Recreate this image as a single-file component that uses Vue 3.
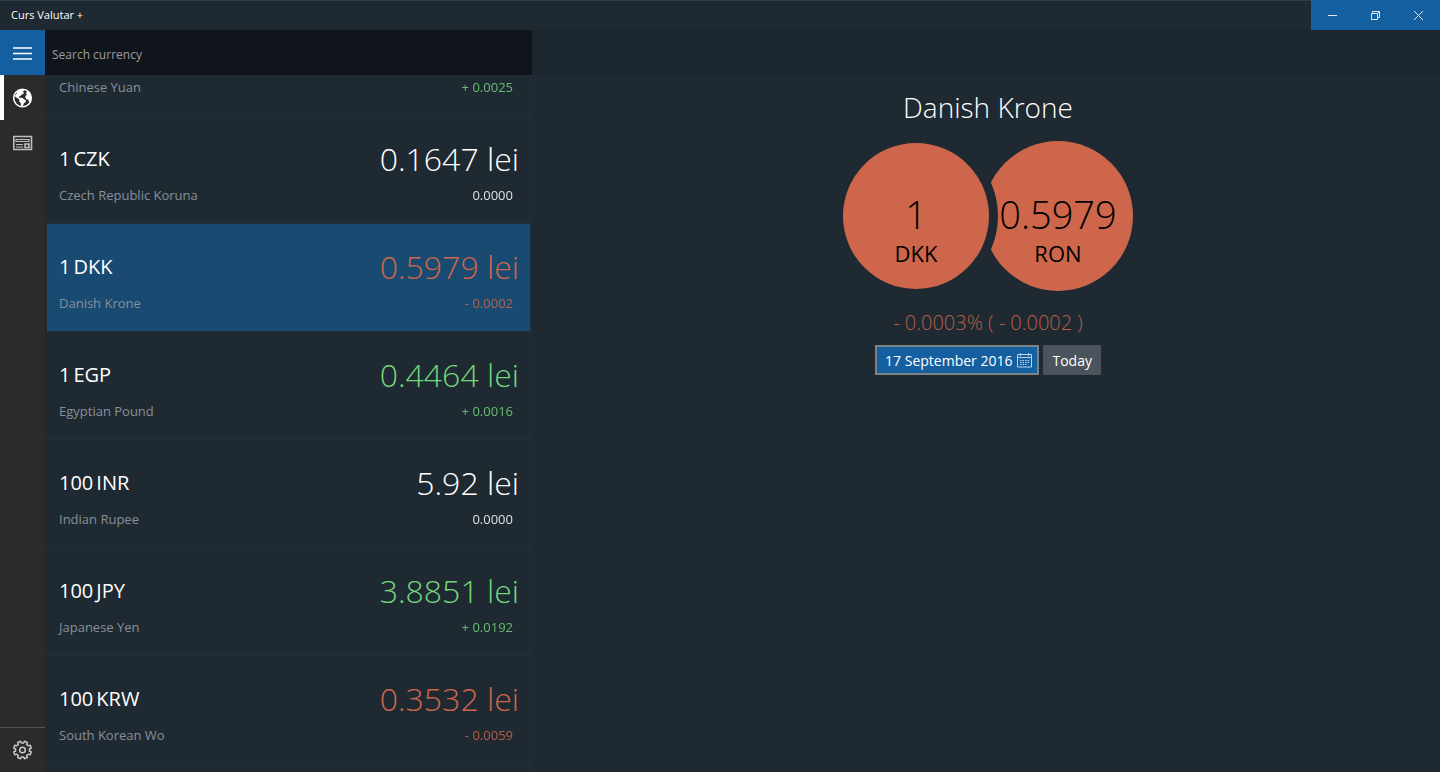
<template>
  <div class="window">
    <header class="titlebar">
      <h1 class="titlebar__title">Curs Valutar +</h1>
      <div class="titlebar__controls">
        <button class="control" type="button" aria-label="Minimize">
          <svg width="11" height="11" viewBox="0 0 11 11"><path d="M1 5.5h9" /></svg>
        </button>
        <button class="control" type="button" aria-label="Restore">
          <svg width="11" height="11" viewBox="0 0 11 11">
            <path d="M1.5 3.5h6v6h-6zM2.5 3.5v-2h7v6h-2M7.5 3.5l2-2" />
          </svg>
        </button>
        <button class="control" type="button" aria-label="Close">
          <svg width="11" height="11" viewBox="0 0 11 11"><path d="M1 1l9 9M10 1l-9 9" /></svg>
        </button>
      </div>
    </header>

    <div class="body">
      <nav class="rail">
        <button class="rail__item rail__item--menu" type="button" aria-label="Menu">
          <svg width="20" height="14" viewBox="0 0 20 14">
            <path d="M0 2h19M0 7.500h19M0 13h19" stroke="#fff" stroke-width="1.600" />
          </svg>
        </button>
        <button class="rail__item rail__item--active" type="button" aria-label="Currencies">
          <svg width="20" height="20" viewBox="0 0 20 20">
            <circle cx="9.500" cy="10" r="8.800" fill="#2b2b2b" stroke="#fff" stroke-width="1.500" />
            <path
              fill="#fff"
              d="M4.500 3.200 7 1.500 10.500 1l.8 1.700-1.500.6 1 1.200-.6 1.700-1.700.4-.8 1.400-1.500.3-.5 1.300 1.500.2 2.400.2 1.700 1.500 1.700.8-.5 1.900-1.600 1.100-.6 1.800-1.200 1.200-1-.5-.4-2.700-1.600-1.600.2-1.900-1.700-1.300-1.200-.8L1.400 8 3.200 6.400z"
            />
            <path fill="#fff" d="M12.600 2 15.500 3.400 17.800 6.500l.7 3.500-1 3.600-1.400.400-.8-2.200-1.800-.5-1.300-1.700.4-1.900 1.400-1-1-1 .4-1.500 1-.6-1.400-.7z" />
          </svg>
        </button>
        <button class="rail__item" type="button" aria-label="News">
          <svg width="20" height="16" viewBox="0 0 20 16" fill="none" stroke="#bdbdbd">
            <path d="M.8 1.500h17.700v13H.8z" stroke-width="1.600" />
            <path d="M3 4.500h13v2H3zM3 9.500h7M3 12h7" stroke-width="1.200" />
            <path d="M12 9h4v3.500h-4z" stroke-width="1.600" />
          </svg>
        </button>
        <button class="rail__item rail__item--settings" type="button" aria-label="Settings">
          <svg width="20" height="20" viewBox="0 0 20 20" fill="none" stroke="#c8c8c8" stroke-width="1.500">
            <path :d="gearPath" stroke-linejoin="round" />
            <circle cx="9.500" cy="10" r="2.800" />
          </svg>
        </button>
      </nav>

      <section class="currencies">
        <input v-model="search" class="search" type="text" placeholder="Search currency" aria-label="Search currency" />
        <ul ref="list" class="list">
          <li v-for="item in filtered" :key="item.code">
            <button
              type="button"
              :class="['row', `row--${item.trend}`, { 'row--selected': item.code === selected }]"
              @click="selected = item.code"
            >
              <span class="row__line row__line--main">
                <span class="row__code"><span>{{ item.amount }}</span><span>{{ item.code }}</span></span>
                <span class="row__value">{{ item.value }} lei</span>
              </span>
              <span class="row__line">
                <span class="row__name">{{ item.name }}</span>
                <span class="row__change">{{ item.change }}</span>
              </span>
            </button>
          </li>
        </ul>
      </section>

      <main class="detail">
        <div class="detail__bar"></div>
        <div class="detail__content">
          <h2 class="detail__title">{{ current.name }}</h2>
          <svg class="rates" width="292" height="152" viewBox="0 0 292 152">
            <defs>
              <mask id="bite">
                <rect width="292" height="152" fill="#fff" />
                <circle cx="74" cy="76" r="82" fill="#000" />
              </mask>
            </defs>
            <circle cx="74" cy="76" r="73" fill="#cd664b" />
            <circle cx="216" cy="76" r="75" fill="#cd664b" mask="url(#bite)" />
            <text class="rates__value" x="74" y="89">{{ current.amount }}</text>
            <text class="rates__code" x="74" y="122">{{ current.code }}</text>
            <text class="rates__value" x="216" y="89">{{ current.value }}</text>
            <text class="rates__code" x="216" y="122">RON</text>
          </svg>
          <p class="detail__change">- 0.0003% ( {{ current.change }} )</p>
          <div class="actions">
            <button class="date" type="button">
              <span>17 September 2016</span>
              <svg width="15" height="15" viewBox="0 0 15 15" fill="none" stroke="#bcd3e8">
                <path d="M.5 1.500h14v12.500H.5zM.5 4.500h14M3.500 0v3M11.500 0v3" />
                <path d="M3 7.500h10M3 9.500h10M3 11.500h7" stroke-dasharray="1.500 1" />
              </svg>
            </button>
            <button class="today" type="button">Today</button>
          </div>
        </div>
      </main>
    </div>
  </div>
</template>

<script setup>
import { computed, onMounted, ref } from 'vue'

const currencies = [
  { amount: 1, code: 'CNY', name: 'Chinese Yuan', value: '0.5970', change: '+ 0.0025', trend: 'up' },
  { amount: 1, code: 'CZK', name: 'Czech Republic Koruna', value: '0.1647', change: '0.0000', trend: 'flat' },
  { amount: 1, code: 'DKK', name: 'Danish Krone', value: '0.5979', change: '- 0.0002', trend: 'down' },
  { amount: 1, code: 'EGP', name: 'Egyptian Pound', value: '0.4464', change: '+ 0.0016', trend: 'up' },
  { amount: 100, code: 'INR', name: 'Indian Rupee', value: '5.92', change: '0.0000', trend: 'flat' },
  { amount: 100, code: 'JPY', name: 'Japanese Yen', value: '3.8851', change: '+ 0.0192', trend: 'up' },
  { amount: 100, code: 'KRW', name: 'South Korean Wo', value: '0.3532', change: '- 0.0059', trend: 'down' }
]

const search = ref('')
const selected = ref('DKK')
const list = ref(null)

const filtered = computed(() =>
  currencies.filter((item) => `${item.code} ${item.name}`.toLowerCase().includes(search.value.toLowerCase()))
)
const current = computed(() => currencies.find((item) => item.code === selected.value))

// Eight teeth around the centre of a 20px box
const gearPath = (() => {
  const points = []
  for (let i = 0; i < 8; i++) {
    const steps = [[-14, 7], [-10, 9], [10, 9], [14, 7]]
    steps.forEach(([offset, radius]) => {
      const angle = ((i * 45 + 22.5 + offset) * Math.PI) / 180
      points.push(`${(9.5 + radius * Math.cos(angle)).toFixed(2)} ${(10 + radius * Math.sin(angle)).toFixed(2)}`)
    })
  }
  return `M${points.join('L')}z`
})()

onMounted(() => {
  list.value.scrollTop = 67
})
</script>

<style>
body {
  background: #1f2932;
}
</style>

<style scoped>
.window {
  display: flex;
  flex-direction: column;
  height: 100vh;
  box-sizing: border-box;
  overflow: hidden;
  background: #1f2932;
  color: #ffffff;
  font-family: "Open Sans", "Noto Sans", sans-serif;
}

button {
  border: none;
  border-radius: 0;
  padding: 0;
  color: inherit;
  font-family: inherit;
  cursor: pointer;
}

/* Title bar */
.titlebar {
  display: flex;
  flex: none;
  height: 30px;
  box-sizing: border-box;
  justify-content: space-between;
  align-items: stretch;
  box-shadow: inset 0 1px #333d46;
}

.titlebar__title {
  margin: 0;
  padding-left: 11px;
  font-size: 11px;
  font-weight: 400;
  line-height: 30px;
}

.titlebar__controls {
  display: flex;
  background: #145f9f;
}

.control {
  display: flex;
  width: 43px;
  align-items: center;
  justify-content: center;
  background: transparent;
}

.control svg {
  fill: none;
  stroke: #dce8f3;
}

.body {
  display: flex;
  flex: 1;
  min-height: 0;
}

/* Navigation rail */
.rail {
  display: flex;
  flex: 0 0 45px;
  flex-direction: column;
  background: #2b2b2b;
}

.rail__item {
  display: flex;
  height: 45px;
  align-items: center;
  justify-content: center;
  background: transparent;
}

.rail__item--menu {
  background: #145f9f;
}

.rail__item--active {
  box-shadow: inset 4px 0 #ffffff;
}

.rail__item--settings {
  margin-top: auto;
  border-top: 1px solid #555555;
}

/* Currency list */
.currencies {
  display: flex;
  flex: 0 0 calc(35% - 17px);
  flex-direction: column;
}

.search {
  flex: none;
  height: 45px;
  box-sizing: border-box;
  padding: 3px 7px 0;
  border: none;
  border-radius: 0;
  outline: none;
  background: #10151c;
  color: #ffffff;
  font-family: inherit;
  font-size: 12px;
}

.search::placeholder {
  color: #9b9da0;
  opacity: 1;
}

.list {
  flex: 1;
  min-height: 0;
  margin: 0 1px 0 2px;
  padding: 0 0 12px;
  border-right: 1px solid #22303e;
  overflow-y: auto;
  scrollbar-width: none;
  list-style: none;
}

.row {
  display: block;
  width: 100%;
  height: 108px;
  box-sizing: border-box;
  padding: 20px 11px 18px 12px;
  border-bottom: 1px solid #22303e;
  background: transparent;
  text-align: left;
}

.row--selected {
  background: #194a72;
}

.row__line {
  display: flex;
  align-items: center;
  justify-content: space-between;
  line-height: 20px;
}

.row__line--main {
  height: 44px;
  margin-bottom: 4px;
}

.row__code {
  display: flex;
  gap: 3px;
  font-size: 20px;
}

.row__value {
  font-size: 32px;
  font-weight: 300;
}

.row__name {
  color: #87909a;
  font-size: 13px;
}

.row__change {
  padding-right: 6px;
  font-size: 13px;
  opacity: 0.85;
}

.row--up .row__value,
.row--up .row__change {
  color: #73d67b;
}

.row--down .row__value,
.row--down .row__change {
  color: #cd664b;
}

/* Selected currency */
.detail {
  flex: 1;
  min-width: 0;
}

.detail__bar {
  height: 45px;
  background: #1c262e;
}

.detail__content {
  display: flex;
  flex-direction: column;
  align-items: center;
  padding: 12px 0 0 4px;
}

.detail__title {
  margin: 0;
  font-size: 28px;
  font-weight: 300;
  line-height: 40px;
}

.rates {
  margin-top: 13px;
}

.rates__value {
  font-size: 38px;
  font-weight: 300;
  text-anchor: middle;
}

.rates__code {
  font-size: 22px;
  text-anchor: middle;
}

.detail__change {
  margin: 16px 0 7px;
  color: #b95f4b;
  font-size: 20px;
  font-weight: 300;
  line-height: 30px;
}

.actions {
  display: flex;
  gap: 4px;
}

.date,
.today {
  height: 30px;
  font-size: 14px;
}

.date {
  display: flex;
  align-items: center;
  gap: 5px;
  padding: 0 5px 0 8px;
  border: 2px solid #7d8287;
  background: #145f9f;
}

.today {
  padding: 0 9px;
  background: #4b535c;
}
</style>
